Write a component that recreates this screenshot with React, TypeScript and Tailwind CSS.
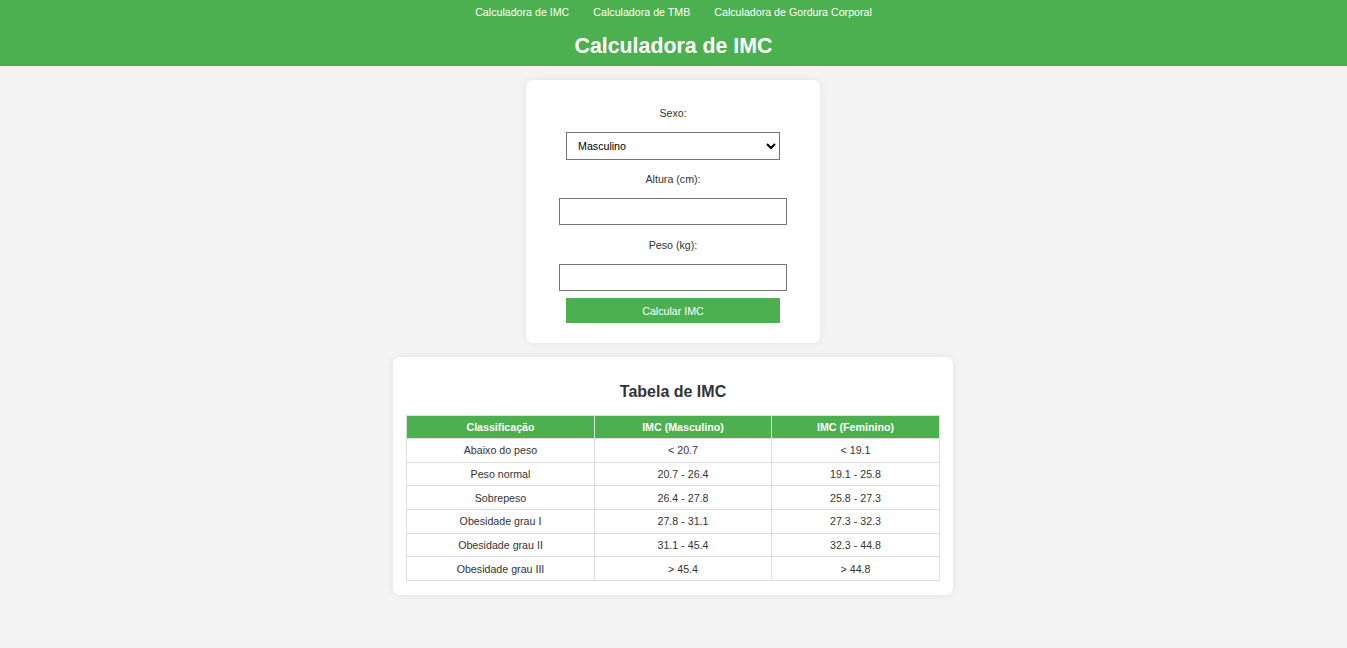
import React from 'react';

const rows = [
  ['Abaixo do peso', '< 20.7', '< 19.1'],
  ['Peso normal', '20.7 - 26.4', '19.1 - 25.8'],
  ['Sobrepeso', '26.4 - 27.8', '25.8 - 27.3'],
  ['Obesidade grau I', '27.8 - 31.1', '27.3 - 32.3'],
  ['Obesidade grau II', '31.1 - 45.4', '32.3 - 44.8'],
  ['Obesidade grau III', '> 45.4', '> 44.8'],
];

const App: React.FC = () => {
  return (
    <div className="min-h-[648px] bg-[#f4f4f4] text-[#333] font-['Liberation_Sans',Arial,sans-serif]">
      <header className="h-[66px] bg-[#4caf50] text-white flex flex-col items-center">
        <nav className="flex gap-[24px] pt-[5px] text-[10.67px] leading-[14px]">
          <a href="#">Calculadora de IMC</a>
          <a href="#">Calculadora de TMB</a>
          <a href="#">Calculadora de Gordura Corporal</a>
        </nav>
        <h1 className="mt-[14px] text-[21.33px] leading-[26px] font-bold">Calculadora de IMC</h1>
      </header>

      <main className="flex flex-col items-center pt-[14px] gap-[14px]">
        <div className="w-[294px] -ml-px bg-white rounded-[7px] shadow-[0_0_8px_rgba(0,0,0,0.08)] flex flex-col items-center pt-[25px] pb-[20px] text-[10.67px]">
          <label className="leading-[16px]">Sexo:</label>
          <select className="mt-[11px] w-[214px] h-[28px] border border-[#767676] bg-white text-black pl-[7px] text-[10.67px]" defaultValue="m">
            <option value="m">Masculino</option>
            <option value="f">Feminino</option>
          </select>
          <label className="mt-[11px] leading-[16px]">Altura (cm):</label>
          <input className="mt-[11px] w-[228px] h-[27px] border border-[#767676] bg-white" type="number" />
          <label className="mt-[12px] leading-[16px]">Peso (kg):</label>
          <input className="mt-[11px] w-[228px] h-[27px] border border-[#767676] bg-white" type="number" />
          <button className="mt-[7px] w-[214px] h-[25px] bg-[#4caf50] text-white text-[10.67px]">Calcular IMC</button>
        </div>

        <div className="w-[560px] -ml-px bg-white rounded-[7px] shadow-[0_0_8px_rgba(0,0,0,0.08)] px-[13px] pt-[25px] pb-[14px]">
          <h2 className="text-center text-[16px] leading-[20px] font-bold">Tabela de IMC</h2>
          <table className="mt-[13px] w-full border-collapse text-[10.67px] text-center">
            <thead>
              <tr className="h-[23px] bg-[#4caf50] text-white">
                <th className="w-[188px] border border-[#ddd] font-bold">Classificação</th>
                <th className="w-[177px] border border-[#ddd] font-bold">IMC (Masculino)</th>
                <th className="border border-[#ddd] font-bold">IMC (Feminino)</th>
              </tr>
            </thead>
            <tbody>
              {rows.map((r) => (
                <tr key={r[0]} className="h-[23.67px]">
                  {r.map((c, i) => (
                    <td key={i} className="border border-[#ddd]">{c}</td>
                  ))}
                </tr>
              ))}
            </tbody>
          </table>
        </div>
      </main>
    </div>
  );
};

export default App;
